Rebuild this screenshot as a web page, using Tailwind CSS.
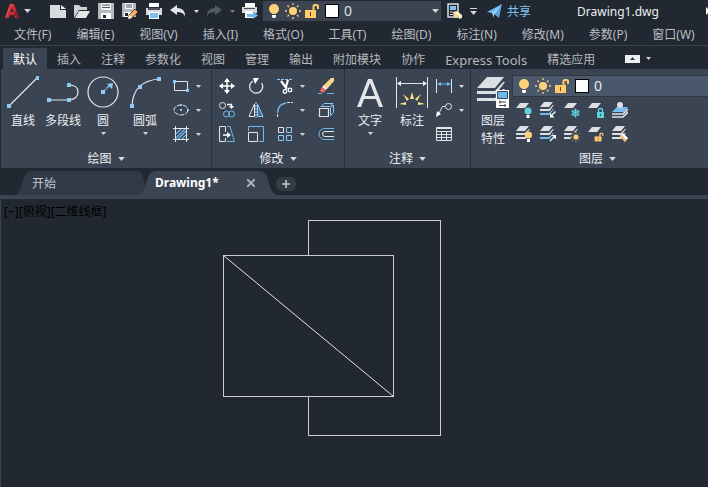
<!DOCTYPE html>
<html lang="zh-CN">
<head>
    <meta charset="UTF-8">
    <meta name="viewport" content="width=device-width, initial-scale=1.0">
    <title>Drawing1.dwg</title>
    <script src="https://cdn.jsdelivr.net/npm/@tailwindcss/browser@4"></script>
</head>
<body class="bg-[#222831] text-[#dfe2e6] text-xs leading-4 font-['Noto_Sans','Noto_Sans_CJK_SC',sans-serif] h-screen flex flex-col overflow-hidden whitespace-nowrap">

    <!-- shared icons -->
    <svg class="hidden">
        <symbol id="caret" viewBox="0 0 5 3"><path d="M0 0h5L2.500 3z" fill="#d5d9de"/></symbol>
        <symbol id="bulb" viewBox="0 0 16 16"><circle cx="8" cy="6" r="5" fill="#ffd27a"/><path d="M5 8h6l-1.500 3h-3z" fill="#ffd27a"/><path d="M6 12h4v2l-1 1H7l-1-1z" fill="#fff"/></symbol>
        <symbol id="sun" viewBox="0 0 16 16"><circle cx="8" cy="8" r="4" fill="#ffd27a"/><path d="M8 0v2M8 14v2M0 8h2M14 8h2M2.500 2.500l1.500 1.500M12 12l1.500 1.500M13.500 2.500L12 4M4 12l-1.500 1.500" stroke="#ffd27a" stroke-width="1.300"/></symbol>
        <symbol id="unlock" viewBox="0 0 16 16"><path d="M1 7h11v8H1z" fill="#ffcb6b"/><path d="M9.500 7V3.500Q9.500 2 11 2h1.500Q14 2 14 3.500V6" fill="none" stroke="#ffcb6b" stroke-width="2"/><path d="M6 9h1v4H6z" fill="#7a3b10"/></symbol>
        <symbol id="sheets" viewBox="0 0 16 16"><path d="M4 0h9L9 5H0zM0 7h9l4-4h1l-4.500 6H0zM0 11h9l4-4h1l-4.500 6H0z" fill="#dcdfe3"/></symbol>
        <symbol id="sheets-blue" viewBox="0 0 16 16"><path d="M4 0h9L9 5H0z" fill="#dcdfe3"/><path d="M0 7h9l4-4h1l-4.500 6H0z" fill="#dcdfe3"/><path d="M0 11h9l4-4h1l-4.500 6H0z" fill="#6db8ee"/></symbol>
        <symbol id="sheet" viewBox="0 0 16 16"><path d="M4 1h9L9 6H0z" fill="#dcdfe3"/></symbol>
    </svg>

    <!-- quick access -->
    <header class="h-[22px] shrink-0 flex items-center">
        <button class="ml-1 w-7 h-5 flex items-center gap-1" aria-label="AutoCAD">
            <svg class="size-4" viewBox="0 0 16 16"><path d="M1 15L6 1h4l5 14h-4l-1-3H6l-1 3z" fill="#c62f38"/><path d="M8 5l1.500 4h-3z" fill="#222831"/><path d="M6 1h4l-1 2H7L4 12l-3 3z" fill="#e04650"/><path d="M10 12l3 3h2l-3-8z" fill="#8e1d26"/></svg>
            <svg class="w-[7px] h-1 shrink-0"><use href="#caret"/></svg>
        </button>
        <button class="ml-[18px]" aria-label="新建"><svg class="size-4" viewBox="0 0 16 16"><path d="M0 2h10v5h6v8H0z" fill="#d9dbde"/><path d="M11 2l5 4h-5z" fill="#f2f3f4"/></svg></button>
        <button class="ml-2" aria-label="打开"><svg class="size-4" viewBox="0 0 16 16"><path d="M0 15V2h5l2 2h6v3H5z" fill="#cfd2d5"/><path d="M5 8h11l-4 7H1z" fill="#e6e7e9"/></svg></button>
        <button class="ml-2" aria-label="保存"><svg class="size-4" viewBox="0 0 16 16"><path d="M0 0h16v16H0z" fill="#b5b8bc"/><path d="M3 0h10v7H3z" fill="#f4f4f5"/><path d="M4 2h8M4 4.500h8" stroke="#555b63"/><path d="M3 10h10v6H3z" fill="#fff"/><path d="M5 12h3v3H5z" fill="#222831"/></svg></button>
        <button class="ml-2" aria-label="另存为"><svg class="size-4" viewBox="0 0 16 16"><path d="M0 0h14v14H0z" fill="#b5b8bc"/><path d="M3 0h8v6H3z" fill="#f4f4f5"/><path d="M4 2h6M4 4h6" stroke="#555b63"/><path d="M2 9h7v5H2z" fill="#fff"/><path d="M3 10h3v3H3z" fill="#222831"/><path d="M6 16l1-4 6-6 3 3-6 6z" fill="#f3b35c" stroke="#3a2a20" stroke-width=".8"/><path d="M6 16l1-4 3 3z" fill="#fff"/></svg></button>
        <button class="ml-2" aria-label="打印"><svg class="size-4" viewBox="0 0 16 16"><path d="M3 0h10v4H3z" fill="#fff"/><path d="M0 5h16v7H0z" fill="#d9dbde"/><path d="M2 5h12v2H2z" fill="#4a515c"/><path d="M3 9h10v7H3z" fill="#fff"/><path d="M4 10h8v5H4z" fill="#7cc0f2"/></svg></button>
        <button class="ml-2" aria-label="放弃"><svg class="size-4" viewBox="0 0 16 16"><path d="M0 7l7-5v3q8 0 8 8v1q-1-5-8-5v3z" fill="#e3e5e8"/></svg></button>
        <button class="ml-1 w-3 h-4 flex items-center justify-center" aria-label="放弃列表"><svg class="w-[5px] h-[3px]"><use href="#caret"/></svg></button>
        <button class="ml-1" aria-label="重做"><svg class="size-4" viewBox="0 0 16 16"><path d="M16 7L9 2v3Q1 5 1 13v1q1-5 8-5v3z" fill="#535a65"/></svg></button>
        <button class="ml-1 w-3 h-4 flex items-center justify-center opacity-50" aria-label="重做列表"><svg class="w-[5px] h-[3px]"><use href="#caret"/></svg></button>
        <button class="ml-1" aria-label="批处理打印"><svg class="size-4" viewBox="0 0 16 16"><path d="M3 0h10v4H3z" fill="#fff"/><path d="M0 4h15v6H0z" fill="#d9dbde"/><path d="M2 5h11v1H2z" fill="#4a515c"/><path d="M3 8h9v7H3z" fill="#fff"/><path d="M5 11h6V8l5 4.500-5 3.500v-2H5z" fill="#72b7ea"/></svg></button>
        <div class="ml-[5px] w-[178px] h-5 flex items-center bg-[#3c4452] pl-[3px] pr-[2px]">
            <svg class="size-4"><use href="#bulb"/></svg>
            <svg class="size-4 ml-[3px]"><use href="#sun"/></svg>
            <svg class="size-4 ml-[3px]"><use href="#unlock"/></svg>
            <span class="size-3.5 ml-[5px] bg-white border border-black"></span>
            <select class="appearance-none flex-1 min-w-0 pl-[5px] text-sm leading-4 outline-none" aria-label="图层"><option>0</option></select>
            <svg class="w-[7px] h-1"><use href="#caret"/></svg>
        </div>
        <button class="ml-1.5" aria-label="特性匹配"><svg class="size-4" viewBox="0 0 16 16"><path d="M1 1h10v13H1z" fill="none" stroke="#d9dbde" stroke-width="1.500"/><path d="M3 3h6v4H3z" fill="#7cc0f2"/><path d="M3 9h3M3 11.500h3" stroke="#d9dbde"/><path d="M6 9l3-1 4 3-3 4H7z" fill="#f0d9a0"/><path d="M10 8l5 4v3l-3 1-1-4-3-2z" fill="#fff0c8"/></svg></button>
        <button class="ml-[7px] flex flex-col items-center gap-0.5" aria-label="自定义"><span class="w-[7px] h-px bg-[#d5d9de]"></span><svg class="w-[7px] h-1"><use href="#caret"/></svg></button>
        <button class="ml-2.5 flex items-center gap-1 text-[#7cc4f5]">
            <svg class="size-4" viewBox="0 0 16 16"><path d="M0 9L15 1l-6 10z" fill="#6db8ee"/><path d="M15 1l-3 14-5-4z" fill="#58a4dc"/><path d="M5 10L15 1 7 12v3z" fill="#9ad3fa"/></svg>
            <span class="pt-0.5">共享</span>
        </button>
        <h1 class="ml-[46px] pt-0.5 text-xs text-[#eceef0]">Drawing1.dwg</h1>
        <svg class="ml-auto w-0.5 h-2" viewBox="0 0 2 8"><path d="M0 0l2 2v4L0 8z" fill="#fff"/></svg>
    </header>

    <!-- menu bar -->
    <nav class="h-6 shrink-0 flex items-center gap-[25px] pl-3.5 pt-0.5 border-b border-[#3a414c] text-[#b9bdc4]">
        <button>文件(F)</button>
        <button>编辑(E)</button>
        <button>视图(V)</button>
        <button>插入(I)</button>
        <button>格式(O)</button>
        <button>工具(T)</button>
        <button>绘图(D)</button>
        <button>标注(N)</button>
        <button>修改(M)</button>
        <button>参数(P)</button>
        <button>窗口(W)</button>
    </nav>

    <!-- ribbon tabs -->
    <nav class="h-[23px] shrink-0 flex items-end pl-[3px] text-[#b4b8bf]">
        <button class="h-[21px] pt-0.5 px-2.5 bg-[#3b4453] text-white">默认</button>
        <button class="h-[21px] pt-0.5 px-2.5">插入</button>
        <button class="h-[21px] pt-0.5 px-2.5">注释</button>
        <button class="h-[21px] pt-0.5 px-2.5">参数化</button>
        <button class="h-[21px] pt-0.5 px-2.5">视图</button>
        <button class="h-[21px] pt-0.5 px-2.5">管理</button>
        <button class="h-[21px] pt-0.5 px-2.5">输出</button>
        <button class="h-[21px] pt-0.5 px-2.5">附加模块</button>
        <button class="h-[21px] pt-0.5 px-2.5">协作</button>
        <button class="h-[21px] pt-0.5 px-2.5 text-[13px]">Express Tools</button>
        <button class="h-[21px] pt-0.5 px-2.5">精选应用</button>
        <button class="h-[21px] ml-5 flex items-center gap-1.5" aria-label="最小化">
            <span class="w-[15px] h-2 bg-[#eceef0] flex items-center justify-center"><svg class="w-[5px] h-[3px]" viewBox="0 0 5 3"><path d="M0 3h5L2.500 0z" fill="#333"/></svg></span>
            <svg class="w-[5px] h-[3px]"><use href="#caret"/></svg>
        </button>
    </nav>

    <!-- ribbon -->
    <main class="ml-px shrink-0 flex bg-[#3b4453] text-[#eceef0]">
        <section class="w-[211px] shrink-0 border-r border-[#2a313c]">
            <div class="h-[79px] pt-[5px] flex pl-0.5">
                <button class="w-10 pt-0.5 flex flex-col items-center">
                    <svg class="size-8 mb-[5px]" viewBox="0 0 32 32"><path d="M2 30L30 2" stroke="#e3e5e8" stroke-width="1.200"/><path d="M0 28h4v4H0zM29 0h4v4h-4z" fill="#8ccbf7"/></svg>
                    直线
                </button>
                <button class="w-10 pt-0.5 flex flex-col items-center">
                    <svg class="size-8 mb-[5px]" viewBox="0 0 32 32"><path d="M2 24h20q9-1 9-8t-9-7" fill="none" stroke="#e3e5e8" stroke-width="1.200"/><path d="M0 22h4v4H0zM20 22h4v4h-4zM20 7h4v4h-4z" fill="#8ccbf7"/></svg>
                    多段线
                </button>
                <button class="w-10 pt-0.5 flex flex-col items-center">
                    <svg class="size-8 mb-[5px]" viewBox="0 0 32 32"><circle cx="16" cy="16" r="15" fill="none" stroke="#e3e5e8" stroke-width="1.200"/><path d="M16 16l7-7" stroke="#8ccbf7" stroke-width="1.300" stroke-dasharray="4 1"/><path d="M26 7l-1 6-5-5zM14 14h4v4h-4z" fill="#8ccbf7"/></svg>
                    圆
                    <svg class="w-[5px] h-[3px] mt-[3px]"><use href="#caret"/></svg>
                </button>
                <button class="w-11 pt-0.5 flex flex-col items-center">
                    <svg class="size-8 mb-[5px]" viewBox="0 0 32 32"><path d="M3 30Q4 5 30 3" fill="none" stroke="#e3e5e8" stroke-width="1.200"/><path d="M1 28h4v4H1zM9 9h4v4H9zM28 1h4v4h-4z" fill="#8ccbf7"/></svg>
                    圆弧
                    <svg class="w-[5px] h-[3px] mt-[3px]"><use href="#caret"/></svg>
                </button>
                <div class="ml-1.5 flex flex-col">
                    <button class="h-6 flex items-center gap-[7px]" aria-label="矩形"><svg class="size-4" viewBox="0 0 16 16"><path d="M1.500 3.500h13v9h-13z" fill="none" stroke="#e3e5e8"/><path d="M0 2h3v3H0zM13 11h3v3h-3z" fill="#8ccbf7"/></svg><svg class="w-[5px] h-[3px]"><use href="#caret"/></svg></button>
                    <button class="h-6 flex items-center gap-[7px]" aria-label="椭圆"><svg class="size-4" viewBox="0 0 16 16"><ellipse cx="8" cy="8" rx="7" ry="5" fill="none" stroke="#e3e5e8" stroke-dasharray="5 1"/><path d="M7 7h2v2H7zM7 2h2v2H7zM14 7h2v2h-2z" fill="#8ccbf7"/></svg><svg class="w-[5px] h-[3px]"><use href="#caret"/></svg></button>
                    <button class="h-6 flex items-center gap-[7px]" aria-label="图案填充"><svg class="size-4" viewBox="0 0 16 16"><path d="M3 8l5-5M3 12l9-9M5 13l8-8M9 13l4-4" stroke="#6db8ee" stroke-width="1.300"/><path d="M0 2.500h16M0 13.500h16M2.500 0v16M13.500 0v16" stroke="#e3e5e8"/></svg><svg class="w-[5px] h-[3px]"><use href="#caret"/></svg></button>
                </div>
            </div>
            <button class="h-5 pt-0.5 w-full flex items-center justify-center gap-1.5">绘图 <svg class="w-[7px] h-1"><use href="#caret"/></svg></button>
        </section>

        <section class="w-[133px] shrink-0 border-r border-[#2a313c]">
            <div class="h-[79px] pt-[5px] pl-[7px] grid grid-cols-[29px_29px_41px_16px] auto-rows-[24px]">
                <button aria-label="移动"><svg class="size-4" viewBox="0 0 16 16"><path d="M8 1v14M1 8h14" stroke="#fff" stroke-width="1.500"/><path d="M8 0l3 4H5zM8 16l3-4H5zM0 8l4-3v6zM16 8l-4-3v6z" fill="#fff"/></svg></button>
                <button aria-label="旋转"><svg class="size-4" viewBox="0 0 16 16"><path d="M13.500 5A6.500 6.500 0 1 1 5 3" fill="none" stroke="#e3e5e8" stroke-width="1.300"/><path d="M5 0h6L7 6z" fill="#fff"/></svg></button>
                <button class="flex items-center gap-[7px]" aria-label="修剪"><svg class="size-4" viewBox="0 0 16 16"><path d="M0 1.500h16" stroke="#8ccbf7" stroke-dasharray="3 1"/><path d="M4 3l6 8M11 2L8.500 10" stroke="#fff" stroke-width="2.200"/><circle cx="8" cy="13.500" r="1.800" fill="none" stroke="#fff" stroke-width="1.300"/><circle cx="13" cy="12" r="1.800" fill="none" stroke="#fff" stroke-width="1.300"/></svg><svg class="w-[5px] h-[3px]"><use href="#caret"/></svg></button>
                <button aria-label="删除"><svg class="size-4" viewBox="0 0 16 16"><path d="M0 15.500h4M9 15.500h7" stroke="#6db8ee"/><path d="M13 0h3v3l-7 8-4-3z" fill="#f8d58a"/><path d="M5.500 7.500L9 10.500l-1 1.500-4-3z" fill="#fff"/><path d="M4 9l4 3-2 2.500H3.500L2 12.500z" fill="#ea6b6b"/></svg></button>

                <button aria-label="复制"><svg class="size-4" viewBox="0 0 16 16"><circle cx="3.500" cy="3.500" r="3" fill="none" stroke="#e3e5e8"/><circle cx="7.500" cy="12" r="3" fill="none" stroke="#6db8ee"/><circle cx="12.500" cy="12" r="3" fill="none" stroke="#6db8ee"/><path d="M8 2.500h4.500V5" fill="none" stroke="#fff" stroke-width="1.300"/><path d="M10 4h5l-2.500 3z" fill="#fff"/></svg></button>
                <button aria-label="镜像"><svg class="size-4" viewBox="0 0 16 16"><path d="M6.500 2v12.500H1z" fill="none" stroke="#e3e5e8"/><path d="M9.500 2v12.500H15z" fill="#3f6f96" stroke="#8ccbf7"/><path d="M8 0v16" stroke="#e3e5e8" stroke-dasharray="2 1"/></svg></button>
                <button class="flex items-center gap-[7px]" aria-label="圆角"><svg class="size-4" viewBox="0 0 16 16"><path d="M.5 11Q1 2 9 1" fill="none" stroke="#6db8ee" stroke-width="1.300"/><path d="M.5 12v4M10 .5h6" stroke="#e3e5e8" stroke-dasharray="3 1"/></svg><svg class="w-[5px] h-[3px]"><use href="#caret"/></svg></button>
                <button aria-label="分解"><svg class="size-4" viewBox="0 0 16 16"><path d="M1.500 6.500h9v8h-9z" fill="none" stroke="#e3e5e8" stroke-width="1.200"/><path d="M3 4.500l3-3h9l-3 3zM12.500 6l3-3v7.500l-3 3z" fill="none" stroke="#8ccbf7"/></svg></button>

                <button aria-label="拉伸"><svg class="size-4" viewBox="0 0 16 16"><path d="M6.500 6V.5h-6v15h6V12" fill="none" stroke="#e3e5e8"/><path d="M8 .5h3l4.500 15H8" fill="none" stroke="#6db8ee"/><path d="M4 9h5" stroke="#fff" stroke-width="1.500"/><path d="M8 6l4 3-4 3z" fill="#fff"/></svg></button>
                <button aria-label="缩放"><svg class="size-4" viewBox="0 0 16 16"><path d="M.5 5V.5h15v15H11" fill="none" stroke="#6db8ee"/><path d="M.5 6.500h9v9h-9z" fill="none" stroke="#e3e5e8"/></svg></button>
                <button class="flex items-center gap-[7px]" aria-label="阵列"><svg class="size-4" viewBox="0 0 16 16"><path d="M1.500 1.500h5v5h-5z" fill="none" stroke="#e3e5e8"/><path d="M9.500 1.500h5v5h-5zM1.500 9.500h5v5h-5zM9.500 9.500h5v5h-5z" fill="none" stroke="#8ccbf7"/></svg><svg class="w-[5px] h-[3px]"><use href="#caret"/></svg></button>
                <button aria-label="偏移"><svg class="size-4" viewBox="0 0 16 16"><path d="M16 2.500H6.500a5.500 5.500 0 0 0 0 11H16" fill="none" stroke="#6db8ee"/><path d="M16 5.500H7a2.500 2.500 0 0 0 0 5h9" fill="none" stroke="#e3e5e8"/></svg></button>
            </div>
            <button class="h-5 pt-0.5 w-full flex items-center justify-center gap-1.5">修改 <svg class="w-[7px] h-1"><use href="#caret"/></svg></button>
        </section>

        <section class="w-[126px] shrink-0 border-r border-[#2a313c]">
            <div class="h-[79px] pt-[5px] flex pl-[5px]">
                <button class="w-10 pt-0.5 flex flex-col items-center">
                    <svg class="size-8 mb-[5px]" viewBox="0 0 32 32"><path d="M3 31L14 3h4l11 28h-4l-3-8H10l-3 8zM11 20h10L16 7z" fill="#e3e5e8"/></svg>
                    文字
                    <svg class="w-[5px] h-[3px] mt-[3px]"><use href="#caret"/></svg>
                </button>
                <button class="w-11 pt-0.5 flex flex-col items-center">
                    <svg class="size-8 mb-[5px]" viewBox="0 0 32 32"><path d="M.5 1v31M31.500 1v31M2 7.500h28" stroke="#e3e5e8"/><path d="M1 7.500l4-2.500v5zM31 7.500l-4-2.500v5z" fill="#fff"/><path d="M16 16l2 7h-4zM7 18l6 5-2 2zM25 18l-6 5 2 2zM3 28l7-2v3zM29 28l-7-2v3z" fill="#ffdd80"/></svg>
                    标注
                </button>
                <div class="ml-0.5 flex flex-col">
                    <button class="h-6 flex items-center gap-[7px]" aria-label="线性"><svg class="size-4" viewBox="0 0 16 16"><path d="M.5 1v14M15.500 1v14" stroke="#e3e5e8"/><path d="M2 6h12" stroke="#6db8ee"/><path d="M1 6l4-2v4zM15 6l-4-2v4z" fill="#6db8ee"/></svg><svg class="w-[5px] h-[3px]"><use href="#caret"/></svg></button>
                    <button class="h-6 flex items-center gap-[7px]" aria-label="引线"><svg class="size-4" viewBox="0 0 16 16"><circle cx="12.500" cy="4.500" r="3" fill="none" stroke="#e3e5e8"/><path d="M9 4.500H6.500L2 13" fill="none" stroke="#e3e5e8"/><path d="M0 15l1-6 4 3z" fill="#fff"/></svg><svg class="w-[5px] h-[3px]"><use href="#caret"/></svg></button>
                    <button class="h-6 flex items-center" aria-label="表格"><svg class="size-4" viewBox="0 0 16 16"><path d="M.5 1.500h15v13H.5zM0 5.500h16M0 8.500h16M0 11.500h16M5.500 5v10M10.500 5v10" fill="none" stroke="#e3e5e8"/><path d="M1 2h14v1H1z" fill="#e3e5e8"/></svg></button>
                </div>
            </div>
            <button class="h-5 pt-0.5 w-full flex items-center justify-center gap-1.5">注释 <svg class="w-[7px] h-1"><use href="#caret"/></svg></button>
        </section>

        <section class="flex-1 min-w-0">
            <div class="h-[79px] pt-[5px] flex pl-[3px]">
                <button class="w-[38px] shrink-0 pt-0.5 flex flex-col items-center">
                    <svg class="size-8 mb-1" viewBox="0 0 32 32"><path d="M10 1h17l-9 11H0zM0 15h18l8-9h2L19 18H0l-1-2zM0 22h18l8-9h2L19 25H0l-1-2z" fill="#dcdfe3"/><path d="M19 14h13v18H19z" fill="#fff"/><path d="M20.500 15.500h10v7h-10z" fill="#6db8ee" stroke="#3b4453"/><path d="M22 26h7M22 29.500h7M23 24.500v3M28 28v3" stroke="#444"/></svg>
                    <span class="leading-[18px]">图层<br>特性</span>
                </button>
                <div class="flex-1 min-w-0 flex flex-col">
                    <div class="mt-px h-[22px] flex shrink-0 items-center bg-[#4b576a] border-y border-l border-[#2f3744] pl-[3px]">
                        <svg class="size-4"><use href="#bulb"/></svg>
                        <svg class="size-4 ml-[3px]"><use href="#sun"/></svg>
                        <svg class="size-4 ml-[3px]"><use href="#unlock"/></svg>
                        <span class="size-3.5 ml-[5px] bg-white border border-black"></span>
                        <select class="appearance-none flex-1 min-w-0 pl-[5px] text-sm leading-4 outline-none" aria-label="当前图层"><option>0</option></select>
                    </div>
                    <div class="mt-px ml-1 grid grid-cols-[repeat(5,24px)] auto-rows-[24px]">
                        <button aria-label="关闭"><svg class="size-4" viewBox="0 0 16 16"><use href="#sheet"/><circle cx="12" cy="9" r="3.500" fill="#5fd0dc"/><path d="M10.500 13h3v3h-3z" fill="#fff"/></svg></button>
                        <button aria-label="隔离"><svg class="size-4" viewBox="0 0 16 16"><use href="#sheets-blue"/><path d="M15.500 9.500L11 14" stroke="#fff" stroke-width="1.300"/><path d="M10 11v4.500h4.500z" fill="#fff"/></svg></button>
                        <button aria-label="冻结"><svg class="size-4" viewBox="0 0 16 16"><use href="#sheet"/><path d="M11.500 6.500v9M7.500 8.700l8 4.600M15.500 8.700l-8 4.600" stroke="#5fd0dc" stroke-width="1.300"/><circle cx="11.500" cy="11" r="3" fill="none" stroke="#5fd0dc"/></svg></button>
                        <button aria-label="锁定"><svg class="size-4" viewBox="0 0 16 16"><use href="#sheet"/><path d="M9 10h7v6H9z" fill="#5fd0dc"/><path d="M10.500 10V7.500q2-2 4 0V10" fill="none" stroke="#5fd0dc" stroke-width="1.300"/><path d="M12 12h1v2h-1z" fill="#205560"/></svg></button>
                        <button aria-label="置为当前"><svg class="size-4" viewBox="0 0 16 16"><path d="M5 5h11l-4 5H0z" fill="#7cc0f2"/><circle cx="8" cy="3" r="3" fill="#dcdfe3"/><path d="M0 12h11l5-5M0 15h11l5-5" fill="none" stroke="#e3e5e8" stroke-width="1.600"/></svg></button>

                        <button aria-label="打开所有图层"><svg class="size-4" viewBox="0 0 16 16"><use href="#sheets"/><circle cx="12.500" cy="9" r="3.500" fill="#ffd27a"/><path d="M11 13h3v3h-3z" fill="#fff"/></svg></button>
                        <button aria-label="取消隔离"><svg class="size-4" viewBox="0 0 16 16"><use href="#sheets-blue"/><path d="M10 15l4.500-4.500" stroke="#fff" stroke-width="1.300"/><path d="M11.500 9H16v4.500z" fill="#fff"/></svg></button>
                        <button aria-label="解冻"><svg class="size-4" viewBox="0 0 16 16"><use href="#sheets"/><circle cx="11.500" cy="11" r="5" fill="#3b4453"/><svg x="7" y="6" width="10" height="10"><use href="#sun"/></svg></svg></button>
                        <button aria-label="解锁"><svg class="size-4" viewBox="0 0 16 16"><use href="#sheet"/><svg x="6" y="6" width="10" height="10"><use href="#unlock"/></svg></svg></button>
                        <button aria-label="匹配图层"><svg class="size-4" viewBox="0 0 16 16"><use href="#sheets"/><path d="M8 10l3-3 5 5-3 4z" fill="#fff"/><path d="M8 10l2-1 4 5-1 2z" fill="#f3b35c"/></svg></button>
                    </div>
                </div>
            </div>
            <button class="h-5 pt-0.5 w-full pl-4 flex items-center justify-center gap-1.5">图层 <svg class="w-[7px] h-1"><use href="#caret"/></svg></button>
        </section>
    </main>

    <!-- file tabs -->
    <nav class="h-[31px] shrink-0 flex items-end pl-3.5 border-b-4 border-[#3b4453]">
        <button class="relative isolate w-[134px] h-6 pt-0.5 pl-[18px] text-left text-[#c3c7cd]">
            <svg class="absolute inset-0 -z-10 size-full" viewBox="0 0 134 24"><path d="M0 24q5-1 7-8l3-10q2-6 8-6h104q5 0 7 6l5 18z" fill="#313947"/></svg>
            开始
        </button>
        <button class="relative isolate -ml-2.5 w-[140px] h-6 pl-[17px] pr-[23px] flex items-center justify-between font-bold text-white">
            <svg class="absolute inset-0 -z-10 size-full" viewBox="0 0 140 24"><path d="M0 24q5-1 7-8l3-10q2-6 8-6h103q6 0 8 6l3 10q2 7 8 8z" fill="#3b4453"/></svg>
            Drawing1*
            <svg class="size-2" viewBox="0 0 8 8"><path d="M0 0l8 8M8 0L0 8" stroke="#b4b8bf" stroke-width="1.800"/></svg>
        </button>
        <button class="-ml-0.5 mb-1 h-3.5 w-[20px] rounded-md bg-[#333b47] flex items-center justify-center" aria-label="新图形"><svg class="size-2" viewBox="0 0 8 8"><path d="M4 0v8M0 4h8" stroke="#c3c7cd" stroke-width="1.600"/></svg></button>
    </nav>

    <!-- model space -->
    <div class="flex-1 min-h-0 flex flex-col relative border-l border-[#3b4453]">
        <svg class="absolute inset-0 size-full" fill="none" stroke="#c9ccd1">
            <path d="M307.500 56V21.500h132v215h-132V198M222.500 56.500h170v141h-170z" shape-rendering="crispEdges"/>
            <path d="M222.500 56.500l170 141" stroke="#e3e5e8"/>
        </svg>
        <p class="relative pl-[3px] pt-[5px] text-black">[−][俯视][二维线框]</p>
    </div>
</body>
</html>
